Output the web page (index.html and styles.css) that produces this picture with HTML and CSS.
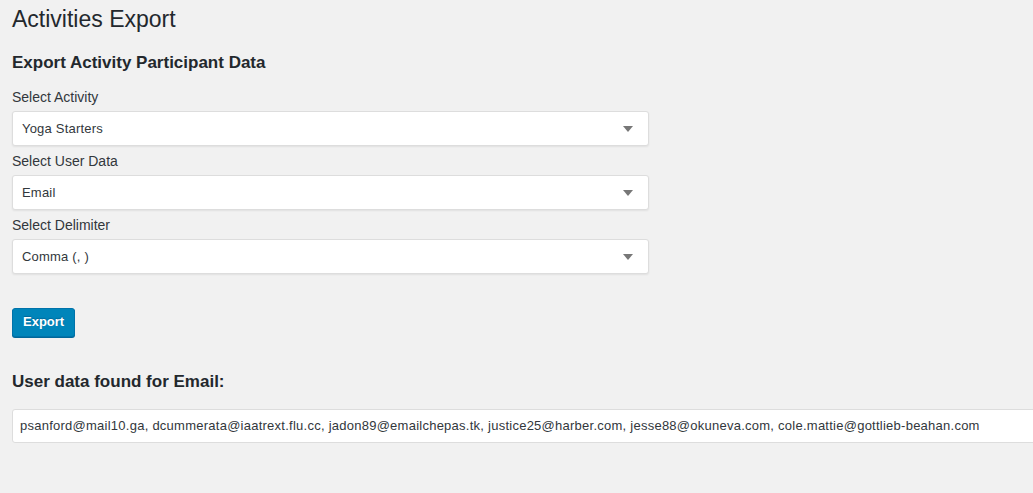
FILE: index.html
```html
<!DOCTYPE html>
<html>
<head>
    <meta charset="utf-8">
    <title>Activities Export</title>
    <link rel="stylesheet" href="styles.css">
</head>
<body>
    <div class="wrap">
        <h1 class="page-title">Activities Export</h1>
        <h3 class="section-title">Export Activity Participant Data</h3>

        <form class="export-form">
            <label class="field-label">Select Activity</label>
            <div class="select">
                <span>Yoga Starters</span>
                <svg class="caret" width="10" height="6" viewBox="0 0 10 6"><path d="M0 0h10L5 6z" fill="#777"/></svg>
            </div>
            <label class="field-label">Select User Data</label>
            <div class="select">
                <span>Email</span>
                <svg class="caret" width="10" height="6" viewBox="0 0 10 6"><path d="M0 0h10L5 6z" fill="#777"/></svg>
            </div>
            <label class="field-label">Select Delimiter</label>
            <div class="select">
                <span>Comma (, )</span>
                <svg class="caret" width="10" height="6" viewBox="0 0 10 6"><path d="M0 0h10L5 6z" fill="#777"/></svg>
            </div>
            <div class="actions">
                <button type="button" class="button-primary">Export</button>
            </div>
        </form>

        <h3 class="result-title">User data found for Email:</h3>
        <div class="result-box">psanford@mail10.ga, dcummerata@iaatrext.flu.cc, jadon89@emailchepas.tk, justice25@harber.com, jesse88@okuneva.com, cole.mattie@gottlieb-beahan.com</div>
    </div>
</body>
</html>
```

FILE: styles.css
```css
html, body {
    margin: 0;
    padding: 0;
    background: #f1f1f1;
}
body {
    font-family: "Liberation Sans", Arial, sans-serif;
    font-size: 13px;
    color: #23282d;
    overflow: hidden;
}
.wrap {
    padding: 0 0 0 12px;
}
.page-title {
    font-size: 23px;
    font-weight: 400;
    line-height: 29px;
    margin: 0;
    padding: 5px 0 0;
}
.section-title {
    font-size: 17px;
    font-weight: 700;
    line-height: 22px;
    margin: 18px 0 0;
}
.export-form {
    margin-top: 13px;
    width: 637px;
}
.field-label {
    display: block;
    font-size: 14px;
    line-height: 20px;
    color: #32373c;
}
.select {
    display: flex;
    align-items: center;
    justify-content: space-between;
    box-sizing: border-box;
    height: 35px;
    margin: 4px 0 5px;
    padding: 0 15px 0 9px;
    background: #fff;
    border: 1px solid #ddd;
    border-radius: 3px;
    box-shadow: 0 1px 2px rgba(0, 0, 0, 0.07);
    color: #32373c;
    letter-spacing: 0.2px;
}
.caret {
    display: block;
}
.actions {
    margin-top: 34px;
    height: 30px;
}
.button-primary {
    font-family: inherit;
    font-size: 13px;
    font-weight: 700;
    height: 29px;
    padding: 0 10px 2px;
    color: #fff;
    background: #0085ba;
    border: 1px solid #0073aa;
    border-radius: 3px;
    box-shadow: 0 1px 0 #006799;
    text-shadow: 0 -1px 1px #006799;
    cursor: pointer;
}
.result-title {
    font-size: 17px;
    font-weight: 700;
    line-height: 22px;
    margin: 33px 0 0;
}
.result-box {
    box-sizing: border-box;
    height: 34px;
    margin-top: 16px;
    margin-right: -20px;
    padding: 0 7px;
    line-height: 32px;
    letter-spacing: 0.25px;
    white-space: nowrap;
    background: #fff;
    border: 1px solid #ddd;
    border-radius: 3px;
    color: #32373c;
}
```
